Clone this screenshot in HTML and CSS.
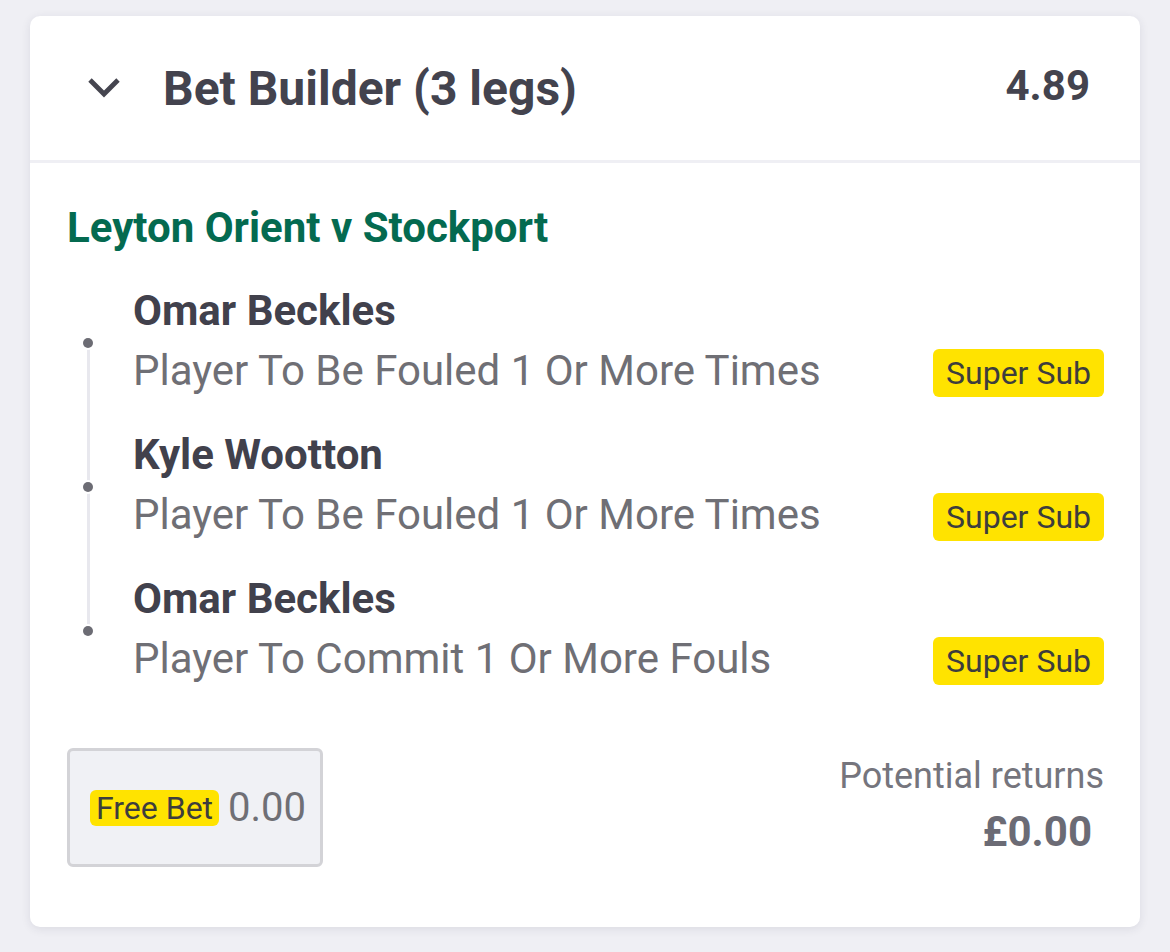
FILE: index.html
```html
<!DOCTYPE html>
<html lang="en">
<head>
<meta charset="utf-8">
<title>Bet Builder</title>
<link rel="stylesheet" href="styles.css">
</head>
<body>
<div class="card">
  <div class="card-header">
    <div class="header-left">
      <svg class="chevron" width="40" height="40" viewBox="0 0 40 40" aria-hidden="true">
        <path d="M6 12 L20 26 L34 12" fill="none" stroke="#45454f" stroke-width="4.8" stroke-linejoin="miter" stroke-linecap="butt"/>
      </svg>
      <span class="title">Bet Builder (3 legs)</span>
    </div>
    <span class="odds">4.89</span>
  </div>
  <div class="card-body">
    <div class="event">Leyton Orient v Stockport</div>
    <div class="legs">
      <div class="leg">
        <div class="leg-name">Omar Beckles</div>
        <div class="leg-row">
          <span class="leg-market">Player To Be Fouled 1 Or More Times</span>
          <span class="badge">Super Sub</span>
        </div>
      </div>
      <div class="leg">
        <div class="leg-name">Kyle Wootton</div>
        <div class="leg-row">
          <span class="leg-market">Player To Be Fouled 1 Or More Times</span>
          <span class="badge">Super Sub</span>
        </div>
      </div>
      <div class="leg">
        <div class="leg-name">Omar Beckles</div>
        <div class="leg-row">
          <span class="leg-market">Player To Commit 1 Or More Fouls</span>
          <span class="badge">Super Sub</span>
        </div>
      </div>
    </div>
    <div class="stake-row">
      <div class="stake-box">
        <span class="free-bet">Free Bet</span>
        <span class="stake-value">0.00</span>
      </div>
      <div class="returns">
        <div class="returns-label">Potential returns</div>
        <div class="returns-value">£0.00</div>
      </div>
    </div>
  </div>
</div>
</body>
</html>
```

FILE: styles.css
```css
html, body {
  margin: 0;
  padding: 0;
}

body {
  background: #efeff4;
  font-family: Roboto, "Noto Sans", "Liberation Sans", sans-serif;
  padding: 16px 30px 0 30px;
  height: 952px;
  box-sizing: border-box;
}

.card {
  width: 1110px;
  background: #ffffff;
  border-radius: 10px;
  box-shadow: 0 2px 10px rgba(40, 40, 70, 0.10);
}

.card-header {
  height: 144px;
  display: flex;
  align-items: center;
  justify-content: space-between;
  padding: 0 50px 0 54px;
  border-bottom: 3px solid #efeff4;
}

.header-left {
  display: flex;
  align-items: center;
}

.chevron {
  display: block;
  margin-right: 39px;
  margin-top: -1px;
}

.title {
  font-size: 48px;
  font-weight: 700;
  color: #43434e;
  margin-top: 1px;
}

.odds {
  font-size: 42px;
  font-weight: 700;
  color: #43434e;
  margin-top: -6px;
}

.card-body {
  padding: 37px 36px 60px 37px;
}

.event {
  font-size: 42px;
  line-height: 55px;
  font-weight: 700;
  color: #046a50;
  margin-bottom: 28px;
}

.legs {
  position: relative;
  display: flex;
  flex-direction: column;
  gap: 29px;
}

.legs::before {
  content: "";
  position: absolute;
  left: 20px;
  top: 60px;
  bottom: 55px;
  width: 3px;
  background: #e8e8ee;
}

.leg {
  position: relative;
  padding-left: 66px;
}

.leg::before {
  content: "";
  position: absolute;
  left: 16px;
  top: 55px;
  width: 10px;
  height: 10px;
  border-radius: 50%;
  background: #6c6c74;
  box-shadow: 0 0 0 2px #ffffff;
}

.leg-name {
  font-size: 42px;
  line-height: 55px;
  font-weight: 700;
  color: #41414c;
  margin-bottom: 5px;
}

.leg-row {
  display: flex;
  align-items: center;
  justify-content: space-between;
  height: 55px;
}

.leg-market {
  font-size: 42px;
  line-height: 55px;
  color: #6f6f75;
}

.badge {
  font-size: 32px;
  line-height: 48px;
  height: 48px;
  padding: 0 13px;
  background: #ffe300;
  color: #3d3d3d;
  border-radius: 6px;
  margin-top: 5px;
}

.stake-row {
  display: flex;
  justify-content: space-between;
  align-items: flex-start;
  margin-top: 62px;
}

.stake-box {
  width: 256px;
  height: 119px;
  box-sizing: border-box;
  border: 3px solid #d3d3d7;
  border-radius: 6px;
  background: #f0f1f5;
  display: flex;
  align-items: center;
  padding-left: 20px;
}

.free-bet {
  font-size: 32px;
  line-height: 36px;
  height: 36px;
  padding: 0 6px;
  background: #ffe300;
  color: #3d3d3d;
  border-radius: 6px;
  margin-right: 9px;
}

.stake-value {
  font-size: 40px;
  color: #6f6f75;
}

.returns {
  text-align: right;
  padding-top: 6px;
}

.returns-label {
  font-size: 36px;
  line-height: 44px;
  color: #75757d;
}

.returns-value {
  font-size: 42px;
  line-height: 55px;
  font-weight: 700;
  color: #6b6b75;
  margin-top: 6px;
  margin-right: 12px;
}
```
